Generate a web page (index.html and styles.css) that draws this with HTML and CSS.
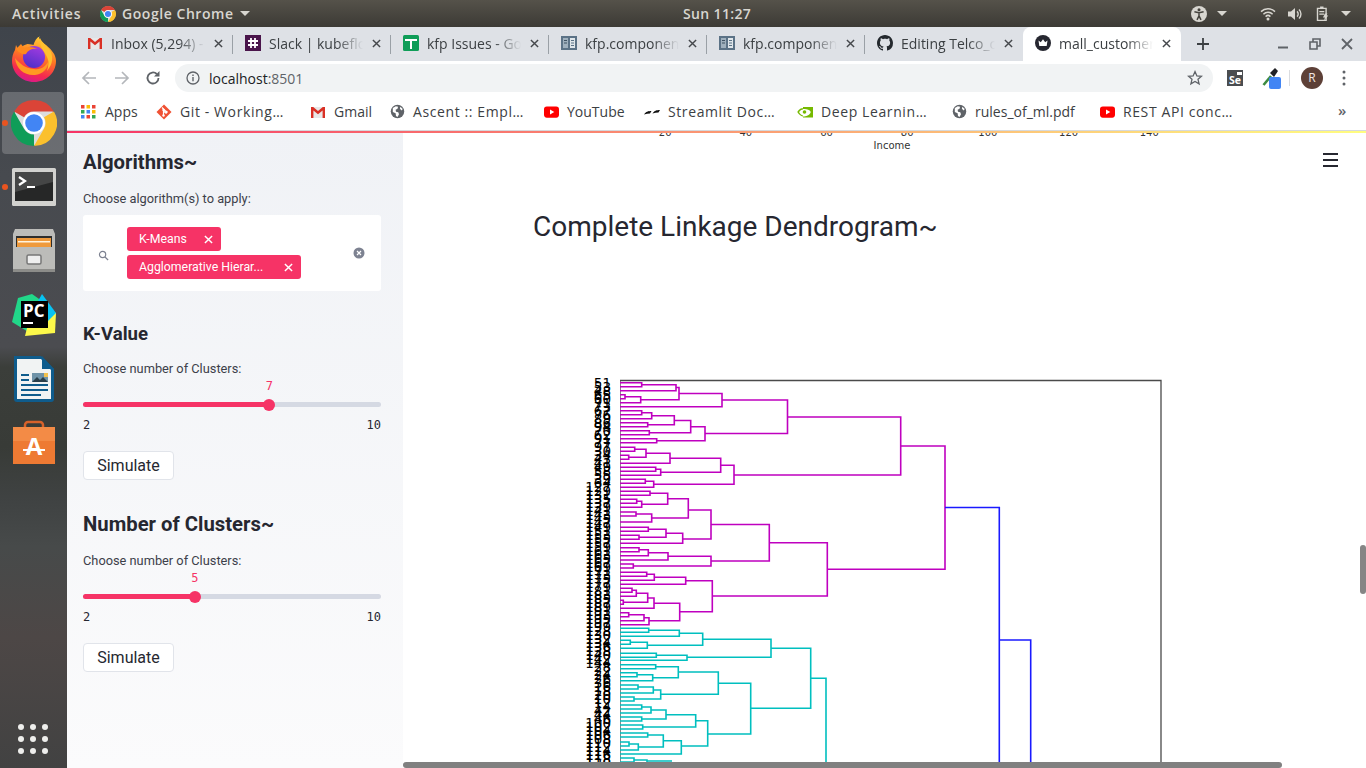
FILE: index.html
```html
<!DOCTYPE html>
<html lang="en">
<head>
<meta charset="utf-8">
<title>mall_customers</title>
<link rel="stylesheet" href="styles.css">
</head>
<body>
<svg class="defs" width="0" height="0" aria-hidden="true">
  <defs>
    <symbol id="chrome" viewBox="0 0 48 48">
      <circle cx="24" cy="24" r="23" fill="#ddd"/>
      <path fill="#db4437" d="M24 0A24 24 0 0 1 44.8 12H24a12 12 0 0 0-10.4 6L3.2 12A24 24 0 0 1 24 0z"/>
      <path fill="#fbc02d" d="M44.8 12A24 24 0 0 1 24 48L34.4 30a12 12 0 0 0 0-12z"/>
      <path fill="#0f9d58" d="M24 48A24 24 0 0 1 3.2 12L13.6 30a12 12 0 0 0 10.4 6z"/>
      <circle cx="24" cy="24" r="11.5" fill="#fff"/>
      <circle cx="24" cy="24" r="9.2" fill="#4285f4"/>
    </symbol>
    <symbol id="gmail" viewBox="0 0 16 16">
      <path fill="#e8e8e8" d="M1 3h14v11H1z"/>
      <path fill="#d93025" d="M1 3h2.2L8 7l4.8-4H15v11h-2.4V6.6L8 10.2 3.4 6.6V14H1z"/>
    </symbol>
    <symbol id="book" viewBox="0 0 16 16">
      <path fill="#5b7286" d="M0 1h16v14H0z"/>
      <path fill="#dfe6ea" d="M9 3h5v10H9z"/>
      <path fill="#5b7286" d="M10 5h3v1h-3zM10 7.5h3v1h-3zM10 10h3v1h-3z"/>
      <path fill="#9fb0bd" d="M2 3h5v10H2z"/>
      <path fill="#3f5263" d="M3 5h3v1H3zM3 7.5h3v1H3z"/>
    </symbol>
    <symbol id="globe" viewBox="0 0 16 16">
      <circle cx="8" cy="8" r="7.2" fill="#5f6368"/>
      <path fill="#fff" d="M3 4.2l3.2-1.8 2.4.6-.6 2-2 1.2.4 2 2.4.6.8 2-1.6 3-1.6-1-.4-3L3 8.4zM11 2.8l2.6 2.6-1.2 1.6L10.6 5z"/>
    </symbol>
    <symbol id="youtube" viewBox="0 0 16 12">
      <rect width="16" height="12" y="0" rx="3" fill="#f00"/>
      <path fill="#fff" d="M6.4 3.4L11 6l-4.6 2.6z"/>
    </symbol>
    <symbol id="x" viewBox="0 0 10 10">
      <path d="M1 1l8 8M9 1L1 9" fill="none" stroke="currentColor" stroke-width="1.6"/>
    </symbol>
  </defs>
</svg>

<header class="topbar">
  <span class="top-activities">Activities</span>
  <span class="top-app">
    <svg class="top-chrome"><use href="#chrome"/></svg>
    <span>Google Chrome</span>
    <i class="caret"></i>
  </span>
  <span class="top-clock">Sun 11:27</span>
  <span class="top-status">
    <svg class="st a11y" viewBox="0 0 16 16"><circle cx="8" cy="8" r="8" fill="#d8d6d0"/><circle cx="8" cy="3.8" r="1.5" fill="#45433d"/><path d="M3.4 5.8L8 6.8l4.6-1M8 6.8v3M8 9.8l-2 4M8 9.8l2 4" stroke="#45433d" stroke-width="1.5" fill="none"/></svg>
    <i class="caret caret-a"></i>
    <svg class="st wifi" viewBox="0 0 16 14"><path d="M1 4.6a10 10 0 0 1 14 0M3.4 7.2a6.6 6.6 0 0 1 9.2 0M5.6 9.6a3.4 3.4 0 0 1 4.8 0" fill="none" stroke="#d8d6d0" stroke-width="1.5"/><circle cx="8" cy="12" r="1.5" fill="#d8d6d0"/></svg>
    <svg class="st vol" viewBox="0 0 16 14"><path fill="#d8d6d0" d="M1 4.6h3L8 1v12L4 9.4H1z"/><path d="M10 4.4a3.4 3.4 0 0 1 0 5.2M12 2.4a6.4 6.4 0 0 1 0 9.2" fill="none" stroke="#d8d6d0" stroke-width="1.4"/></svg>
    <svg class="st batt" viewBox="0 0 14 16"><path fill="none" stroke="#d8d6d0" stroke-width="1.4" d="M2 2.4h8.6v12H2z"/><path fill="#d8d6d0" d="M4.6.6h3.4v2H4.6zM3.8 5h5v1.2h-5zM3.8 7.6h5v1.2h-5zM9.6 7.4L7.4 11.4h2l-1 3.4 4.4-5.2h-2.2l1.4-2.2z"/></svg>
    <i class="caret caret-b"></i>
  </span>
</header>

<div class="desktop">
  <nav class="dock">
    <div class="dock-item">
      <svg class="dock-icon" viewBox="0 0 46 46">
        <defs>
          <linearGradient id="ff" x1="0.7" y1="0" x2="0.4" y2="1"><stop offset="0" stop-color="#ffd43a"/><stop offset=".45" stop-color="#ff7a22"/><stop offset=".8" stop-color="#f5294f"/><stop offset="1" stop-color="#d91a8a"/></linearGradient>
          <linearGradient id="ffg" x1="0.7" y1="0" x2="0.3" y2="1"><stop offset="0" stop-color="#a23be0"/><stop offset="1" stop-color="#4f2fc8"/></linearGradient>
        </defs>
        <path fill="url(#ff)" d="M28 0c0 4 3 6 7 9 6 5 10 10 10 16 0 12-10 21-22 21S1 37 1 25c0-4 1-8 3-11l1-5 2.500 5c2-3 5-5 9-6 3 0 5 1 6 1 1-4 3-7 6-9z"/>
        <path fill="#ffc02e" d="M29 2c2 5 8 8 11 14 3 8 0 14-4 19 2-6 2-11-1-16-3-5-7-10-6-17z"/>
        <path fill="#ff9a22" d="M4 22c1 11 10 18 20 17 8-1 13-6 14-15-3 7-9 10-15 9-9-1-14-5-19-11z"/>
        <circle cx="23" cy="21" r="11" fill="url(#ffg)"/>
        <path fill="#ff8a1e" d="M5 13l5-5 3 4c5-2 9-1 14 1-6-1-10 1-12 5-3 1-7-1-10-5z"/>
      </svg>
    </div>
    <div class="dock-item is-active">
      <i class="run-dot"></i>
      <svg class="dock-icon"><use href="#chrome"/></svg>
    </div>
    <div class="dock-item">
      <i class="run-dot"></i>
      <svg class="dock-icon" viewBox="0 0 46 46">
        <rect x="1" y="4" width="44" height="38" rx="1.500" fill="#d2d2cf"/>
        <rect x="4" y="8" width="38" height="29" fill="#262727"/>
        <path d="M4 8h38v10L4 28z" fill="#454646"/>
        <path d="M8 13l6 4-6 4" fill="none" stroke="#fff" stroke-width="2.200"/>
        <path fill="#fff" d="M16 22h8v2h-8z"/>
      </svg>
    </div>
    <div class="dock-item">
      <svg class="dock-icon" viewBox="0 0 46 46">
        <path fill="#bcbcb9" d="M4 1h38l2 5v38H2V6z"/>
        <path fill="#8c8c89" d="M2 41h42v3H2z"/>
        <path fill="#2e2e2d" d="M5 8h36v11H5z"/>
        <path fill="#ef9a3c" d="M6 10h34v9H6z"/>
        <path fill="#fff3dd" d="M7 13h32v1.500H7z"/>
        <rect x="16" y="27" width="14" height="9" rx="1.500" fill="#eee" stroke="#777" stroke-width="1.500"/>
      </svg>
    </div>
    <div class="dock-item">
      <svg class="dock-icon" viewBox="0 0 46 46">
        <path fill="#21d789" d="M1 30L7 6l14-4 10 7-12 32z"/>
        <path fill="#fcf84a" d="M14 44l30-3 1-20-12-4-16 15z"/>
        <path fill="#07c3f2" d="M31 2l14 19-8 8-10-20z"/>
        <rect x="10" y="9" width="27" height="27" fill="#000"/>
        <text x="12" y="24.500" class="pc-text">PC</text>
        <rect x="12" y="30" width="10" height="2" fill="#fff"/>
      </svg>
    </div>
    <div class="dock-item">
      <svg class="dock-icon" viewBox="0 0 46 46">
        <path fill="#0f5c8c" d="M3 0h27l13 13v30a3 3 0 0 1-3 3H6a3 3 0 0 1-3-3z"/>
        <path fill="#f1f3f3" d="M6 3h24l10 11v29H6z"/>
        <path fill="#0f5c8c" d="M31 0l12 13H31z"/>
        <path fill="#0f5c8c" d="M10 18h8v2h-8zM10 23h8v2h-8zM10 28h27v2H10zM10 33h27v2H10zM10 38h20v2H10z"/>
        <rect x="21" y="17" width="16" height="9" fill="#6f93a8"/>
        <path fill="#2a3f4a" d="M21 26l5-5 3 3 3-3 5 5z"/>
        <rect x="33" y="17" width="4" height="4" fill="#f2c14e"/>
      </svg>
    </div>
    <div class="dock-item">
      <svg class="dock-icon" viewBox="0 0 46 46">
        <path d="M14 10V5a3 3 0 0 1 3-3h12a3 3 0 0 1 3 3v5" fill="none" stroke="#d8622a" stroke-width="2.500"/>
        <rect x="2" y="7" width="42" height="37" fill="#ee7a33"/>
        <path fill="#f38b46" d="M2 7h42v14H2z"/>
        <text x="23" y="35" class="sw-text">A</text>
        <path fill="#fff" d="M12 29h22v2H12z"/>
      </svg>
    </div>
    <div class="dock-grid">
      <i></i><i></i><i></i><i></i><i></i><i></i><i></i><i></i><i></i>
    </div>
  </nav>

  <div class="browser">
    <div class="tabstrip">
      <div class="tab"><svg class="fav"><use href="#gmail"/></svg><span class="tab-title">Inbox (5,294) - rkumar</span><svg class="tab-x"><use href="#x"/></svg></div>
      <div class="tab"><svg class="fav" viewBox="0 0 16 16"><rect width="16" height="16" fill="#4a154b"/><path d="M6 3v10M10 3v10M3 6h10M3 10h10" stroke="#fff" stroke-width="1.800"/></svg><span class="tab-title">Slack | kubeflow</span><svg class="tab-x"><use href="#x"/></svg></div>
      <div class="tab"><svg class="fav" viewBox="0 0 16 16"><rect width="16" height="16" rx="1.500" fill="#0f9d58"/><path d="M2 5h12M8 5v9" stroke="#fff" stroke-width="2"/></svg><span class="tab-title">kfp Issues - Google</span><svg class="tab-x"><use href="#x"/></svg></div>
      <div class="tab"><svg class="fav"><use href="#book"/></svg><span class="tab-title">kfp.components</span><svg class="tab-x"><use href="#x"/></svg></div>
      <div class="tab"><svg class="fav"><use href="#book"/></svg><span class="tab-title">kfp.components</span><svg class="tab-x"><use href="#x"/></svg></div>
      <div class="tab"><svg class="fav" viewBox="0 0 16 16"><path fill="#24292e" d="M8 0C3.58 0 0 3.58 0 8c0 3.54 2.29 6.53 5.47 7.59.4.07.55-.17.55-.38 0-.19-.01-.82-.01-1.490-2.010.37-2.530-.49-2.690-.94-.09-.23-.48-.94-.82-1.130-.28-.15-.68-.52-.01-.53.63-.01 1.080.58 1.230.82.72 1.210 1.870.87 2.330.66.07-.52.28-.87.51-1.070-1.780-.2-3.640-.89-3.640-3.950 0-.87.31-1.590.82-2.150-.08-.2-.36-1.020.08-2.120 0 0 .67-.21 2.200.82.64-.18 1.320-.27 2-.27.68 0 1.360.09 2 .27 1.530-1.040 2.200-.82 2.200-.82.44 1.100.16 1.920.08 2.120.51.56.82 1.270.82 2.150 0 3.070-1.870 3.750-3.650 3.950.29.25.54.73.54 1.480 0 1.070-.01 1.930-.01 2.200 0 .21.15.46.55.38A8.013 8.013 0 0016 8c0-4.420-3.580-8-8-8z"/></svg><span class="tab-title">Editing Telco_customer</span><svg class="tab-x"><use href="#x"/></svg></div>
      <div class="tab is-active"><svg class="fav" viewBox="0 0 16 16"><circle cx="8" cy="8" r="8" fill="#262730"/><path fill="#fff" d="M3.500 5.500l2.300 1.700L8 4.300l2.200 2.900 2.300-1.700-.8 5.500H4.300z"/></svg><span class="tab-title">mall_customers</span><svg class="tab-x"><use href="#x"/></svg></div>
      <svg class="newtab" viewBox="0 0 12 12"><path d="M6 0v12M0 6h12" stroke="#3c4043" stroke-width="1.800"/></svg>
      <div class="winctl">
        <svg class="win" viewBox="0 0 12 12"><path d="M1 9.500h10" stroke="#5f6368" stroke-width="2"/></svg>
        <svg class="win" viewBox="0 0 12 12"><path d="M1 4h7v7H1zM4 4V1h7v7H8" fill="none" stroke="#5f6368" stroke-width="1.600"/></svg>
        <svg class="win" viewBox="0 0 12 12"><path d="M1 1l10 10M11 1L1 11" stroke="#5f6368" stroke-width="1.800"/></svg>
      </div>
    </div>

    <div class="toolbar">
      <svg class="nav-ic nav-back" viewBox="0 0 16 16"><path d="M15 8H2M8 2L2 8l6 6" fill="none" stroke="#b4b7bb" stroke-width="1.700"/></svg>
      <svg class="nav-ic nav-fwd" viewBox="0 0 16 16"><path d="M1 8h13M8 2l6 6-6 6" fill="none" stroke="#b4b7bb" stroke-width="1.700"/></svg>
      <svg class="nav-ic nav-rel" viewBox="0 0 16 16"><path d="M13.500 8a5.500 5.500 0 1 1-1.700-4" fill="none" stroke="#5f6368" stroke-width="1.800"/><path fill="#5f6368" d="M14.500 1v5.500H9z"/></svg>
      <div class="omnibox">
        <svg class="omni-info" viewBox="0 0 14 14"><circle cx="7" cy="7" r="6" fill="none" stroke="#5f6368" stroke-width="1.300"/><path fill="#5f6368" d="M6.300 6h1.400v4.200H6.300zM6.300 3.600h1.400V5H6.300z"/></svg>
        <span class="omni-url">localhost<span class="omni-port">:8501</span></span>
        <svg class="omni-star" viewBox="0 0 16 16"><path d="M8 1.600l1.900 4.300 4.600.4-3.500 3 1.100 4.500L8 11.400l-4.100 2.400L5 9.300l-3.500-3 4.600-.4z" fill="none" stroke="#5f6368" stroke-width="1.300"/></svg>
      </div>
      <div class="ext-se"><span>Se</span></div>
      <svg class="ext-drop" viewBox="0 0 20 22"><path d="M1.500 18L9 9" stroke="#3d8b40" stroke-width="2.600"/><path d="M8 6l5-5 3 3-4 6z" fill="#202124"/><rect x="7" y="10" width="12" height="12" rx="2" fill="#4285f4"/></svg>
      <i class="tool-sep"></i>
      <span class="avatar">R</span>
      <svg class="kebab" viewBox="0 0 4 16"><circle cx="2" cy="2" r="1.500" fill="#5f6368"/><circle cx="2" cy="8" r="1.500" fill="#5f6368"/><circle cx="2" cy="14" r="1.500" fill="#5f6368"/></svg>
    </div>

    <div class="bookmarks">
      <div class="bm bm-apps"><svg class="bm-ic" viewBox="0 0 15 15"><path fill="#ea4335" d="M0 1h3.500v3.500H0z"/><path fill="#fbbc05" d="M5.500 1H9v3.500H5.500z"/><path fill="#ea4335" d="M11 1h3.500v3.500H11z"/><path fill="#34a853" d="M0 6h3.500v3.500H0z"/><path fill="#4285f4" d="M5.500 6H9v3.500H5.500z"/><path fill="#fbbc05" d="M11 6h3.500v3.500H11z"/><path fill="#4285f4" d="M0 11h3.500v3.500H0z"/><path fill="#ea4335" d="M5.500 11H9v3.500H5.500z"/><path fill="#34a853" d="M11 11h3.500v3.500H11z"/></svg><span>Apps</span></div>
      <div class="bm bm-git bm-trunc"><svg class="bm-ic" viewBox="0 0 16 16"><path fill="#f05133" d="M8 .5L15.500 8 8 15.500.5 8z"/><path d="M6 3.500l4 4M7.500 6v5.500M8 7.500l2.500 2" stroke="#fff" stroke-width="1.200"/><circle cx="7.500" cy="6" r="1.200" fill="#fff"/><circle cx="7.500" cy="11.500" r="1.200" fill="#fff"/><circle cx="10.500" cy="8" r="1.200" fill="#fff"/></svg><span>Git - Working…</span></div>
      <div class="bm bm-gmail"><svg class="bm-ic"><use href="#gmail"/></svg><span>Gmail</span></div>
      <div class="bm bm-ascent bm-trunc"><svg class="bm-ic"><use href="#globe"/></svg><span>Ascent :: Empl…</span></div>
      <div class="bm bm-yt"><svg class="bm-ic bm-ytic"><use href="#youtube"/></svg><span>YouTube</span></div>
      <div class="bm bm-st bm-trunc"><svg class="bm-ic" viewBox="0 0 16 16"><path fill="#111" d="M0 10.500C2 7.500 4 7 7.500 7L6 9.500C4 9.500 2 10 0 10.500zM8.500 9.500C10.500 6.500 12.500 6 16 6l-1.500 2.500C12.500 8.500 10.500 9 8.500 9.500z"/></svg><span>Streamlit Doc…</span></div>
      <div class="bm bm-nv bm-trunc"><svg class="bm-ic" viewBox="0 0 16 16"><path fill="#76b900" d="M6 4C2.500 4.300.8 7 .3 8c1.500 2.500 3.500 4.300 5.700 4.500v-1C4.200 11 3 9.800 2 8c1-1.300 2.300-2.500 4-2.600V4zM6 3h10v10.500H6v-1c3.200 0 6.500-1 7.800-4.500C12.500 5.200 9 4.700 6 5z"/><circle cx="7.500" cy="8" r="1.800" fill="#76b900"/></svg><span>Deep Learnin…</span></div>
      <div class="bm bm-rules"><svg class="bm-ic"><use href="#globe"/></svg><span>rules_of_ml.pdf</span></div>
      <div class="bm bm-rest bm-trunc"><svg class="bm-ic bm-ytic"><use href="#youtube"/></svg><span>REST API conc…</span></div>
      <span class="bm-more">»</span>
    </div>

    <div class="content">
      <i class="deco"></i>
      <aside class="sidebar">
        <h2 class="side-h first">Algorithms~</h2>
        <p class="side-label lab-a">Choose algorithm(s) to apply:</p>
        <div class="multiselect">
          <svg class="ms-search" viewBox="0 0 12 12"><circle cx="5" cy="5" r="3.400" fill="none" stroke="#7d8291" stroke-width="1.300"/><path d="M7.500 7.500L11 11" stroke="#7d8291" stroke-width="1.500"/></svg>
          <div class="chips">
            <span class="chip chip-k"><span>K-Means</span><svg class="chip-x"><use href="#x"/></svg></span>
            <span class="chip chip-a"><span>Agglomerative Hierar...</span><svg class="chip-x"><use href="#x"/></svg></span>
          </div>
          <svg class="ms-clear" viewBox="0 0 12 12"><circle cx="6" cy="6" r="5.500" fill="#7d8291"/><path d="M4 4l4 4M8 4L4 8" stroke="#fff" stroke-width="1.200"/></svg>
        </div>
        <h2 class="side-h sec-k">K-Value</h2>
        <p class="side-label lab-s">Choose number of Clusters:</p>
        <div class="slider">
          <div class="slider-val-row"><span class="slider-val" style="left:62.5%">7</span></div>
          <div class="track"><div class="fill" style="width:62.5%"><i class="thumb"></i></div></div>
          <div class="minmax"><span>2</span><span>10</span></div>
        </div>
        <button class="simulate">Simulate</button>
        <h2 class="side-h sec-n">Number of Clusters~</h2>
        <p class="side-label lab-a">Choose number of Clusters:</p>
        <div class="slider">
          <div class="slider-val-row"><span class="slider-val" style="left:37.5%">5</span></div>
          <div class="track"><div class="fill" style="width:37.5%"><i class="thumb"></i></div></div>
          <div class="minmax"><span>2</span><span>10</span></div>
        </div>
        <button class="simulate">Simulate</button>
      </aside>

      <main class="main">
        <div class="ticks"><span>20</span><span>40</span><span>60</span><span>80</span><span>100</span><span>120</span><span>140</span></div>
        <div class="xlabel">Income</div>
        <h1 class="title">Complete Linkage Dendrogram~</h1>
        <div class="figure">
          <div class="leaves">51<br>53<br>48<br>65<br>60<br>71<br>73<br>67<br>76<br>89<br>86<br>94<br>70<br>62<br>91<br>77<br>97<br>30<br>34<br>43<br>41<br>49<br>58<br>55<br>39<br>64<br>127<br>129<br>131<br>135<br>137<br>139<br>141<br>143<br>145<br>147<br>149<br>151<br>153<br>155<br>157<br>159<br>161<br>163<br>165<br>167<br>169<br>171<br>173<br>175<br>177<br>179<br>181<br>183<br>185<br>187<br>189<br>191<br>193<br>195<br>197<br>199<br>128<br>130<br>132<br>134<br>136<br>138<br>140<br>142<br>144<br>28<br>22<br>24<br>26<br>36<br>16<br>18<br>20<br>10<br>12<br>14<br>42<br>44<br>46<br>100<br>102<br>104<br>106<br>108<br>110<br>112<br>114<br>116<br>118<br>120</div>
          <svg class="dendro" viewBox="620 375 545 393">
            <path class="frame" d="M620 770V380.500H1161V770"/>
            <path class="mag" d="M620 382.700H641.700V386.700H620M641.700 384.700H676V390.700H620M620 394.700H625V398.700H620M625 396.700H640.700V402.700H620M676 387.500H679V399.700H640.700M679 393.500H722V406.700H620M620 410.700H641.700V414.700H620M641.700 412.700H651.700V418.700H620M620 422.700H647.700V426.700H620M651.700 415.700H674.300V424.700H647.700M620 430.700H649.300V434.700H620M674.300 420.500H690.700V432.700H649.300M620 438.700H656.700V442.700H620M690.700 426.700H705V440.700H656.700M722 400H787.500V433.500H705M620 447.300H634.700V451.300H620M620 455.300H628.700V459.300H620M634.700 449.300H646V457.300H628.700M646 453.300H670V463.300H620M620 467.300H655.700V471.300H620M655.700 469.300H660.700V475.300H620M620 479.300H645.300V483.300H620M645.300 481.300H653.700V487.300H620M670 458.300H720.700V472.300H660.700M720.700 465.300H734V484.300H653.700M787.500 417H900.700V475H734M620 491.300H650V495.300H620M620 499.300H636.700V503.300H620M636.700 501.300H641.700V507.300H620M650 493.300H667.700V504.300H641.700M620 512H636V516H620M636 514H651.700V522H620M667.700 498.800H688.300V518H651.700M688.300 510H711V539H682.700M620 527.300H648.300V531.300H620M620 535.300H639V539.300H620M648.300 529.300H666V537.300H639M666 533.300H682.700V543.300H620M620 547.700H639V551.700H620M639 549.700H648.300V555.700H620M648.300 552.700H668V560H620M620 564H633.300V568H620M668 556.300H711V566H633.300M711 524.500H769.300V561H711M620 572.300H646.700V576.300H620M646.700 574.300H654.300V580.300H620M654.300 577.300H685.700V584.300H620M620 588.300H632V592.300H620M632 590.300H636.300V596.300H620M620 600.300H623.300V604.300H620M636.300 593.300H647.700V602.300H623.300M647.700 598H654V608.300H620M620 612.700H628.700V616.700H620M628.700 614.700H644V620.700H620M644 617.700H649V624.700H620M654 603.300H679.700V620.700H649M685.700 580.700H712.300V611.700H679.700M769.300 542.700H827.300V596H712.300M900.700 446H945V569.300H827.300"/>
            <path class="cya" d="M620 628.300H648.700V632.300H620M648.700 630.300H679.300V636.300H620M620 640.300H630.300V644.300H620M630.300 642.300H647.300V648.300H620M679.300 633.300H702.700V645.300H647.300M620 653.300H656.300V657.300H620M656.300 655.300H687V660.300H620M702.700 639.300H771V657.300H687M620 664.700H655.700V668.700H620M620 672.700H637V676.700H620M637 674.700H652.700V680.700H620M655.700 666.700H678.300V677.700H652.700M620 685H638V689H620M638 687H653.300V693H620M620 697H634V701H620M653.300 690H660.700V699H634M678.300 672H718.300V694.300H660.700M620 705H641.700V709H620M641.700 707H651V713H620M620 717H641.700V721H620M651 710H666V719H641.700M620 725H642.700V729H620M666 714.700H695.700V727H642.700M620 733H647.700V737H620M620 742H629V746H620M629 744H638.300V750H620M647.700 735H663.300V747H638.300M663.300 740.700H681.300V754H620M695.700 720.700H707.700V746H681.300M718.300 683.300H750.700V734H707.700M771 648.300H810.700V708.300H750.700M810.700 678.300H826V770M620 758H634V762H620M634 760H647V766H620M647 761H672"/>
            <path class="blu" d="M945 507.500H999.300V770M999.300 640H1030.700V770"/>
          </svg>
        </div>
      </main>
      <button class="hamburger" aria-label="menu"><i></i><i></i><i></i></button>
      <i class="vthumb"></i>
      <i class="hthumb"></i>
    </div>
  </div>
</div>
</body>
</html>
```

FILE: styles.css
```css
* { box-sizing: border-box; }
html, body { margin: 0; padding: 0; height: 768px; width: 1366px; overflow: hidden; }
body { font-family: "Open Sans", "Noto Sans", sans-serif; display: flex; flex-direction: column; background: #fff; }
.defs { position: absolute; }
i { display: block; }

/* GNOME top bar */
.topbar { height: 27px; flex: none; display: flex; align-items: center; position: relative; background: linear-gradient(#55524a, #3c3a35); color: #d8d6d0; font-size: 14px; font-weight: 600; letter-spacing: .55px; }
.top-activities { margin-left: 12px; width: 88px; letter-spacing: .8px; }
.top-app { display: flex; align-items: center; }
.top-chrome { width: 16px; height: 16px; margin-right: 6px; }
.caret { width: 0; height: 0; border-left: 5px solid transparent; border-right: 5px solid transparent; border-top: 5px solid #d8d6d0; margin-left: 6px; }
.top-clock { position: absolute; left: 683px; letter-spacing: .35px; }
.top-status { position: absolute; left: 1191px; top: 0; height: 27px; display: flex; align-items: center; }
.st { display: block; }
.a11y { width: 16px; height: 16px; }
.caret-a { margin-left: 10px; }
.wifi { width: 16px; height: 14px; margin-left: 33px; }
.vol { width: 16px; height: 14px; margin-left: 11px; }
.batt { width: 15px; height: 16px; margin-left: 12px; }
.caret-b { margin-left: 11px; }

.desktop { flex: 1; min-height: 0; display: flex; }

/* dock */
.dock { width: 67px; flex: none; display: flex; flex-direction: column; background: linear-gradient(#3f444b 0, #474a4f 150px, #4b4c50 320px, #3b3e3a 340px, #383b37 420px, #3f4242 470px, #474a4a 520px, #4d4746 610px, #424242 741px); }
.dock-item { height: 64px; flex: none; display: flex; align-items: center; justify-content: center; position: relative; }
.dock-item.is-active::before { content: ""; position: absolute; left: 2px; right: 3px; top: 1px; bottom: 1px; border-radius: 4px; background: rgba(255,255,255,.2); }
.dock-icon { width: 46px; height: 46px; position: relative; }
.run-dot { position: absolute; left: 2px; top: 29px; width: 6px; height: 6px; border-radius: 50%; background: #e95420; }
.pc-text { font: 700 17px "Open Sans", sans-serif; fill: #fff; }
.sw-text { font: 700 24px "Open Sans", sans-serif; fill: #fff; text-anchor: middle; }
.dock-grid { margin-top: auto; margin-bottom: 14px; margin-left: 18px; display: grid; grid-template-columns: repeat(3, 6px); gap: 6px; }
.dock-grid i { width: 6px; height: 6px; border-radius: 50%; background: #eeeeec; }

/* browser */
.browser { flex: 1; min-width: 0; display: flex; flex-direction: column; }
.tabstrip { height: 34px; flex: none; display: flex; padding-left: 8px; background: #dee1e6; align-items: stretch; }
.tab { width: 158px; flex: none; display: flex; align-items: center; padding: 0 0 2px 12px; position: relative; font-size: 14px; color: #3c4043; }
.tab::after { content: ""; position: absolute; right: 0; top: 8px; bottom: 7px; width: 1px; background: #9aa0a6; }
.tab:nth-child(6)::after, .tab.is-active::after { display: none; }
.tab.is-active { background: #fff; border-radius: 8px 8px 0 0; }
.fav { width: 16px; height: 16px; flex: none; margin-right: 8px; }
.tab-title { width: 94px; white-space: nowrap; overflow: hidden; -webkit-mask-image: linear-gradient(90deg, #000 72%, transparent 100%); mask-image: linear-gradient(90deg, #000 72%, transparent 100%); }
.tab-x { width: 9px; height: 9px; margin-left: 9px; flex: none; color: #45484c; }
.newtab { width: 12px; height: 12px; margin: 11px 0 0 16px; flex: none; }
.winctl { display: flex; margin-left: 68px; padding-top: 11px; }
.win { width: 12px; height: 12px; margin-right: 20px; }

.toolbar { height: 34px; flex: none; display: flex; align-items: center; background: #fff; position: relative; }
.nav-ic { width: 16px; height: 16px; flex: none; }
.nav-back { margin-left: 14px; }
.nav-fwd { margin-left: 17px; }
.nav-rel { margin-left: 15px; }
.omnibox { width: 1038px; height: 28px; margin-left: 14px; border-radius: 14px; background: #f1f3f4; display: flex; align-items: center; flex: none; }
.omni-info { width: 14px; height: 14px; margin-left: 11px; }
.omni-url { margin-left: 9px; font-size: 14px; color: #202124; }
.omni-port { color: #5f6368; }
.omni-star { width: 16px; height: 16px; margin-left: auto; margin-right: 10px; }
.ext-se { width: 16px; height: 16px; margin-left: 14px; background: #4a4d50; color: #fff; font: 700 10.500px/20px "Open Sans", sans-serif; text-align: center; flex: none; position: relative; }
.ext-se::after { content: ""; position: absolute; right: 1px; top: 2px; width: 5px; height: 3px; background: #fff; }
.ext-drop { width: 20px; height: 22px; margin-left: 19px; flex: none; }
.tool-sep { width: 1px; height: 16px; background: #dadce0; margin-left: 7px; flex: none; }
.avatar { width: 22px; height: 22px; border-radius: 50%; background: #5d4037; color: #f1e6e2; font-size: 12px; line-height: 22px; text-align: center; margin-left: 11px; flex: none; }
.kebab { width: 4px; height: 16px; margin-left: 19px; flex: none; }

.bookmarks { height: 36px; flex: none; display: flex; align-items: center; background: #fff; padding: 0 0 2px 14px; font-size: 14px; color: #3c4043; border-bottom: 1px solid #d6d9dd; position: relative; }
.bm { display: flex; align-items: center; flex: none; white-space: nowrap; }
.bm-trunc span { letter-spacing: .6px; }
.bm-ic { width: 16px; height: 16px; margin-right: 8px; flex: none; }
.bm-ytic { width: 15px; height: 12px; margin-right: 8px; }
.bm-apps { width: 75px; }
.bm-apps .bm-ic { width: 15px; height: 15px; margin-right: 9px; }
.bm-git { width: 154px; }
.bm-gmail { width: 80px; }
.bm-ascent { width: 154px; }
.bm-ascent .bm-ic, .bm-rules .bm-ic { width: 15px; height: 15px; margin-right: 8px; }
.bm-yt { width: 100px; }
.bm-st { width: 153px; }
.bm-nv { width: 155px; }
.bm-rules { width: 148px; }
.bm-more { position: absolute; left: 1271px; top: 5px; font-size: 15px; font-weight: 600; color: #5f6368; }

/* page */
.content { flex: 1; min-height: 0; display: flex; position: relative; overflow: hidden; font-family: Roboto, "Noto Sans", sans-serif; }
.deco { position: absolute; z-index: 5; left: 0; right: 0; top: 0; height: 2px; background: linear-gradient(90deg, #f63366, #fffd80); }
.sidebar { width: 336px; flex: none; padding: 18px 22px 0 16px; background: linear-gradient(#f0f2f6, #fbfbfc); color: #262730; display: flex; flex-direction: column; align-items: stretch; }
.side-h { margin: 0; font-size: 20.300px; line-height: 26px; font-weight: 700; color: #262730; }
.sec-k { margin-top: 30px; font-size: 18.600px; }
.sec-n { margin-top: 31px; }
.side-label { margin: 0; font-size: 12.800px; line-height: 16px; color: #3d3f4a; }
.lab-a { margin-top: 16px; }
.lab-s { margin-top: 14px; }
.multiselect { margin-top: 8px; height: 76px; flex: none; background: #fff; border-radius: 3px; display: flex; align-items: center; position: relative; padding-left: 44px; }
.ms-search { position: absolute; left: 15px; top: 35px; width: 11px; height: 11px; }
.ms-clear { position: absolute; left: 270px; top: 32px; width: 12px; height: 12px; }
.chips { display: flex; flex-direction: column; gap: 4px; align-items: flex-start; }
.chip { height: 24px; background: #f63366; color: #fff; border-radius: 3px; font-size: 12.300px; line-height: 24px; padding-left: 12px; display: flex; align-items: center; white-space: nowrap; }
.chip-k { width: 94px; }
.chip-a { width: 174px; }
.chip-x { width: 9px; height: 9px; margin-left: auto; margin-right: 8px; color: #fff; flex: none; }
.slider { flex: none; }
.slider-val-row { height: 16px; margin-top: 1px; position: relative; }
.slider-val { position: absolute; transform: translateX(-50%); top: 0; color: #f63366; font: 12px/16px "DejaVu Sans Mono", monospace; }
.track { margin-top: 8px; height: 5px; border-radius: 3px; background: #d5d9e3; }
.fill { height: 5px; border-radius: 3px; background: #f63366; position: relative; }
.thumb { position: absolute; right: -6px; top: -3.500px; width: 12px; height: 12px; border-radius: 50%; background: #f63366; }
.minmax { margin-top: 10px; display: flex; justify-content: space-between; font: 12px/16px "DejaVu Sans Mono", monospace; color: #262730; }
.simulate { display: block; margin-top: 18px; width: 91px; height: 29px; background: #fff; border: 1px solid #e1e4ea; border-radius: 4px; padding: 0; font: 16px Roboto, sans-serif; color: #262730; }

.main { flex: 1; min-width: 0; background: #fff; color: #262730; }
.ticks { margin: -3px 0 0 221.800px; height: 10px; display: flex; font: 10px/10px "DejaVu Sans", sans-serif; color: #333; }
.ticks span { width: 80.700px; text-align: center; flex: none; }
.xlabel { margin: 1px 0 0 470px; width: 38px; text-align: center; font: 10px/14px "DejaVu Sans", sans-serif; color: #333; }
.title { margin: 56px 0 0 130px; font-size: 28px; line-height: 36px; font-weight: 400; color: #262730; white-space: nowrap; }
.figure { margin: 130px 0 0 182px; display: flex; align-items: flex-start; }
.leaves { width: 26px; margin-top: 5.700px; flex: none; font: 13.500px/4px "DejaVu Sans", sans-serif; color: #000; text-align: right; }
.dendro { width: 545px; height: 393px; margin-left: 9px; flex: none; display: block; }
.dendro path { fill: none; stroke-width: 1.600; }
.frame { stroke: #4a4a4a; stroke-width: 1.300 !important; }
.mag { stroke: #bf00bf; }
.cya { stroke: #00bfbf; }
.blu { stroke: #1a1aff; }

.hamburger { position: absolute; top: 22px; left: 1256px; width: 15px; height: 14px; padding: 0; border: 0; background: none; display: flex; flex-direction: column; justify-content: space-between; }
.hamburger i { height: 2px; width: 15px; background: #262730; }
.vthumb { position: absolute; right: 0; top: 414px; width: 6px; height: 49px; border-radius: 3px; background: #858585; }
.hthumb { position: absolute; left: 336px; top: 631px; width: 879px; height: 6px; border-radius: 3px; background: #808080; }
```
